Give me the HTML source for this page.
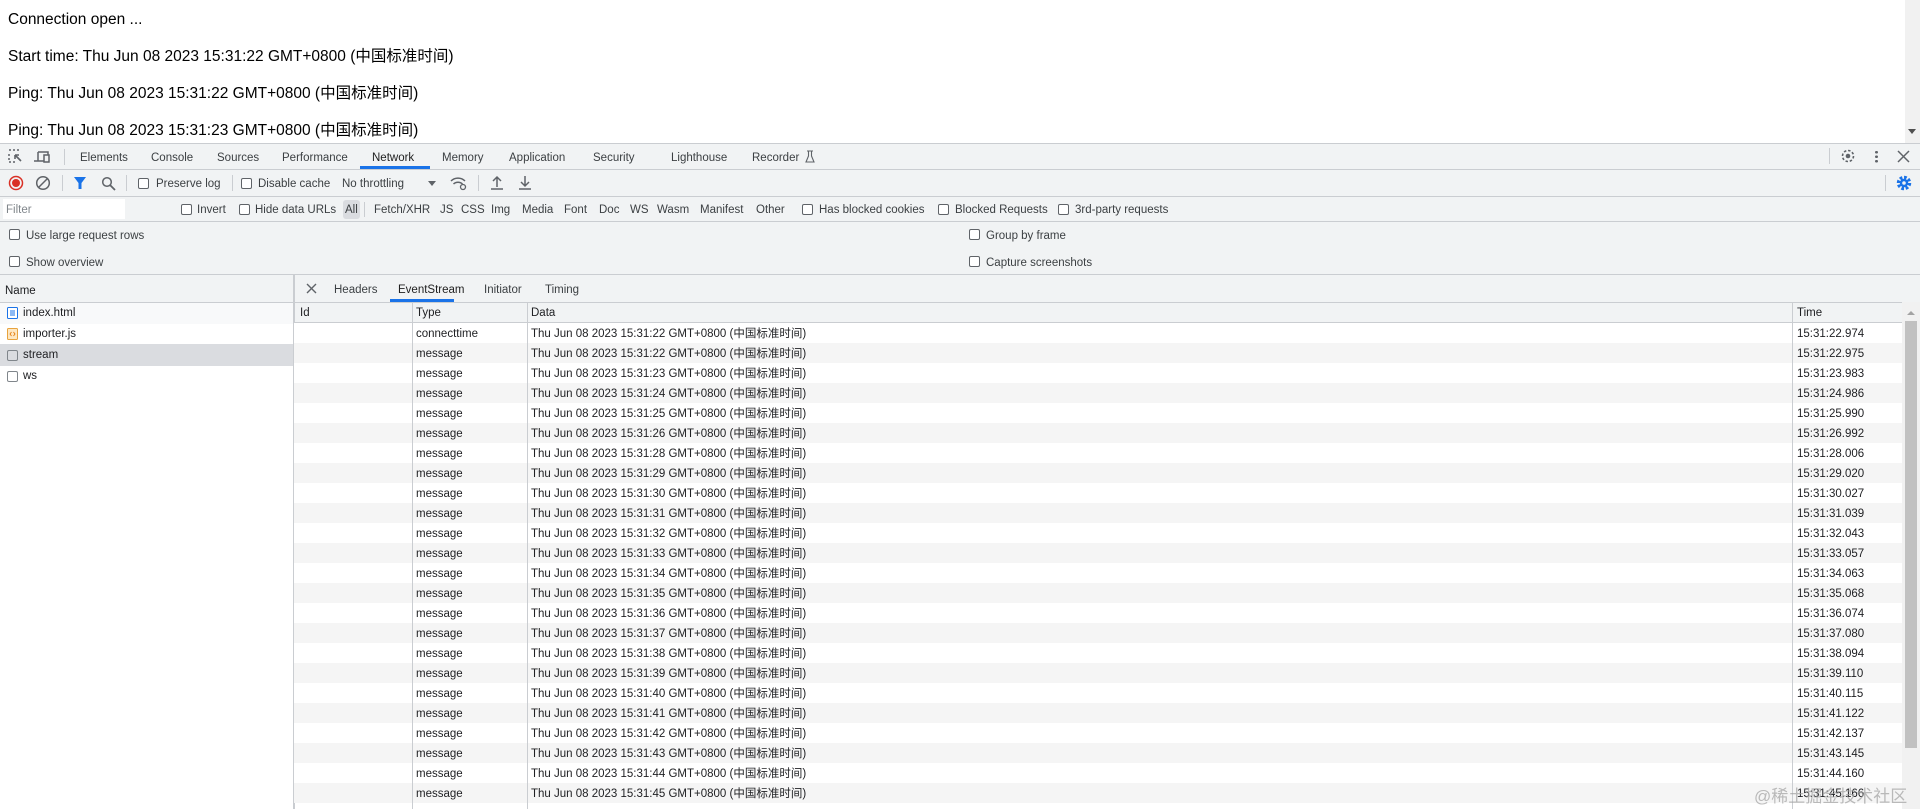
<!DOCTYPE html>
<html><head><meta charset="utf-8"><style>
*{box-sizing:border-box;margin:0;padding:0}
body{width:1920px;height:809px;overflow:hidden;background:#fff;font-family:"Liberation Sans","Noto Sans CJK SC",sans-serif;position:relative;color:#202124}
.a{position:absolute;white-space:nowrap}
.t{font-size:11.5px;color:#3c4043;line-height:14px;margin-top:2px}
.pg{font-size:15.5px;color:#000;left:8px;line-height:18px}
.cb{position:absolute;width:11px;height:11px;border:1px solid #5f6368;border-radius:2px;background:#fff}
.hl{position:absolute;height:1px;background:#cacdd1;left:0;width:1920px}
.vl{position:absolute;width:1px;background:#cacdd1}
.row{position:absolute;left:294px;width:1608px;height:20px;font-size:11.5px;color:#202124}
.row span{position:absolute;top:1px;line-height:20px;height:20px}
</style></head><body>
<div class="a pg" style="top:11px">Connection open ...</div>
<div class="a pg" style="top:48px">Start time: Thu Jun 08 2023 15:31:22 GMT+0800 (中国标准时间)</div>
<div class="a pg" style="top:85px">Ping: Thu Jun 08 2023 15:31:22 GMT+0800 (中国标准时间)</div>
<div class="a pg" style="top:122px">Ping: Thu Jun 08 2023 15:31:23 GMT+0800 (中国标准时间)</div>
<div class="a" style="left:1905px;top:0;width:15px;height:143px;background:#f1f1f1"></div>
<div class="a" style="left:1908px;top:129px;width:0;height:0;border-left:4px solid transparent;border-right:4px solid transparent;border-top:5px solid #505050"></div>

<div class="a" style="left:0;top:143px;width:1920px;height:666px;background:#f1f3f4"></div>
<div class="hl" style="top:143px"></div>
<div class="hl" style="top:169px"></div>
<div class="hl" style="top:196px"></div>
<div class="hl" style="top:221px"></div>
<div class="hl" style="top:274px"></div>

<svg class="a" style="left:8px;top:149px" width="44" height="16" viewBox="0 0 44 16"><path d="M1 1h2M5 1h2M9 1h2M1 5v2M1 9v2M1 13h2M5 13h2" stroke="#5f6368" stroke-width="1.5"/><path d="M7 6l6 6M7 6h4M7 6v4" stroke="#5f6368" stroke-width="1.6" fill="none"/><path d="M30 3h10v3M30 3v9M26 12h10" stroke="#5f6368" stroke-width="1.5" fill="none"/><rect x="36" y="6" width="5" height="7" fill="none" stroke="#5f6368" stroke-width="1.5"/></svg>
<div class="vl" style="left:64px;top:149px;height:16px"></div>
<div class="a t" style="left:80px;top:149px">Elements</div>
<div class="a t" style="left:151px;top:149px">Console</div>
<div class="a t" style="left:217px;top:149px">Sources</div>
<div class="a t" style="left:282px;top:149px">Performance</div>
<div class="a t" style="left:372px;top:149px;color:#1f1f1f">Network</div>
<div class="a" style="left:360px;top:166px;width:70px;height:3px;background:#1a73e8"></div>
<div class="a t" style="left:442px;top:149px">Memory</div>
<div class="a t" style="left:509px;top:149px">Application</div>
<div class="a t" style="left:593px;top:149px">Security</div>
<div class="a t" style="left:671px;top:149px">Lighthouse</div>
<div class="a t" style="left:752px;top:149px">Recorder</div>
<svg class="a" style="left:805px;top:150px" width="10" height="13"><path d="M2 1h6M3.5 1v5L1 12h8L6.5 6V1" fill="none" stroke="#5f6368" stroke-width="1.1"/></svg>
<div class="vl" style="left:1829px;top:148px;height:16px"></div>
<svg class="a" style="left:1840px;top:148px" width="16" height="16" viewBox="0 0 16 16"><circle cx="8" cy="8" r="5.5" fill="none" stroke="#5f6368" stroke-width="1.6" stroke-dasharray="2.5 1.8"/><circle cx="8" cy="8" r="2.3" fill="#5f6368"/></svg>
<div class="a" style="left:1875px;top:150px;width:3px;height:13px;background:radial-gradient(circle,#5f6368 1.3px,transparent 1.5px) 0 0/3px 4.5px"></div>
<svg class="a" style="left:1897px;top:150px" width="13" height="13"><path d="M1 1l11 11M12 1L1 12" stroke="#5f6368" stroke-width="1.5"/></svg>

<svg class="a" style="left:8px;top:175px" width="16" height="16"><circle cx="8" cy="8" r="6.5" fill="none" stroke="#d93025" stroke-width="1.5"/><circle cx="8" cy="8" r="4" fill="#d93025"/></svg>
<svg class="a" style="left:35px;top:175px" width="16" height="16"><circle cx="8" cy="8" r="6.3" fill="none" stroke="#5f6368" stroke-width="1.5"/><path d="M3.5 12.5l9-9" stroke="#5f6368" stroke-width="1.5"/></svg>
<div class="vl" style="left:62px;top:175px;height:16px"></div>
<svg class="a" style="left:74px;top:176px" width="12" height="14"><path d="M0 1h12L7.5 7v6h-3V7z" fill="#1a73e8"/></svg>
<svg class="a" style="left:101px;top:176px" width="15" height="15"><circle cx="6" cy="6" r="4.3" fill="none" stroke="#5f6368" stroke-width="1.5"/><path d="M9 9l5 5" stroke="#5f6368" stroke-width="1.8"/></svg>
<div class="vl" style="left:126px;top:175px;height:16px"></div>
<div class="cb" style="left:138px;top:178px"></div>
<div class="a t" style="left:156px;top:175px">Preserve log</div>
<div class="vl" style="left:232px;top:175px;height:16px"></div>
<div class="cb" style="left:241px;top:178px"></div>
<div class="a t" style="left:258px;top:175px">Disable cache</div>
<div class="a t" style="left:342px;top:175px">No throttling</div>
<div class="a" style="left:428px;top:181px;border-left:4px solid transparent;border-right:4px solid transparent;border-top:5px solid #5f6368"></div>
<svg class="a" style="left:450px;top:175px" width="18" height="16"><path d="M1 6a10 10 0 0 1 14 0M3.5 9a6.5 6.5 0 0 1 9 0" fill="none" stroke="#5f6368" stroke-width="1.5"/><circle cx="13" cy="12" r="2.5" fill="none" stroke="#5f6368" stroke-width="1.3"/></svg>
<div class="vl" style="left:478px;top:175px;height:16px"></div>
<svg class="a" style="left:490px;top:175px" width="14" height="16"><path d="M7 12V2M3 6l4-4 4 4M1 14h12" fill="none" stroke="#5f6368" stroke-width="1.5"/></svg>
<svg class="a" style="left:518px;top:175px" width="14" height="16"><path d="M7 1v10M3 7l4 4 4-4M1 14h12" fill="none" stroke="#5f6368" stroke-width="1.5"/></svg>
<div class="vl" style="left:1885px;top:175px;height:16px"></div>
<svg class="a" style="left:1896px;top:175px" width="16" height="16" viewBox="0 0 16 16"><circle cx="8" cy="8" r="5.5" fill="none" stroke="#1a73e8" stroke-width="3.5" stroke-dasharray="2.6 1.7"/><circle cx="8" cy="8" r="4.2" fill="#1a73e8"/><circle cx="8" cy="8" r="1.8" fill="#f1f3f4"/></svg>

<div class="a" style="left:3px;top:199px;width:122px;height:20px;background:#fff"></div>
<div class="a t" style="left:6px;top:201px;color:#80868b">Filter</div>
<div class="cb" style="left:181px;top:204px"></div><div class="a t" style="left:197px;top:201px">Invert</div>
<div class="cb" style="left:239px;top:204px"></div><div class="a t" style="left:255px;top:201px">Hide data URLs</div>
<div class="a" style="left:343px;top:200px;width:17px;height:19px;background:#dadce0;border-radius:3px"></div>
<div class="a t" style="left:345px;top:201px">All</div>
<div class="vl" style="left:364px;top:202px;height:15px"></div>
<div class="a t" style="left:374px;top:201px">Fetch/XHR</div>
<div class="a t" style="left:440px;top:201px">JS</div>
<div class="a t" style="left:461px;top:201px">CSS</div>
<div class="a t" style="left:491px;top:201px">Img</div>
<div class="a t" style="left:522px;top:201px">Media</div>
<div class="a t" style="left:564px;top:201px">Font</div>
<div class="a t" style="left:599px;top:201px">Doc</div>
<div class="a t" style="left:630px;top:201px">WS</div>
<div class="a t" style="left:657px;top:201px">Wasm</div>
<div class="a t" style="left:700px;top:201px">Manifest</div>
<div class="a t" style="left:756px;top:201px">Other</div>
<div class="cb" style="left:802px;top:204px"></div><div class="a t" style="left:819px;top:201px">Has blocked cookies</div>
<div class="cb" style="left:938px;top:204px"></div><div class="a t" style="left:955px;top:201px">Blocked Requests</div>
<div class="cb" style="left:1058px;top:204px"></div><div class="a t" style="left:1075px;top:201px">3rd-party requests</div>

<div class="cb" style="left:9px;top:229px"></div><div class="a t" style="left:26px;top:227px">Use large request rows</div>
<div class="cb" style="left:9px;top:256px"></div><div class="a t" style="left:26px;top:254px">Show overview</div>
<div class="cb" style="left:969px;top:229px"></div><div class="a t" style="left:986px;top:227px">Group by frame</div>
<div class="cb" style="left:969px;top:256px"></div><div class="a t" style="left:986px;top:254px">Capture screenshots</div>

<div class="a" style="left:0;top:302px;width:293px;height:507px;background:#fff"></div>
<div class="a" style="left:0;top:302px;width:293px;height:22px;background:#f8f9fa"></div>
<div class="a" style="left:0;top:344px;width:293px;height:22px;background:#dadce0"></div>
<div class="hl" style="top:302px;width:294px"></div>
<div class="a t" style="left:5px;top:282px;color:#202124">Name</div>
<div class="vl" style="left:293px;top:274px;height:535px;width:2px;background:#cacdd1"></div>
<svg class="a" style="left:7px;top:307px" width="11" height="12"><rect x=".5" y=".5" width="10" height="11" rx="1" fill="#fff" stroke="#1a73e8"/><path d="M3 4h5M3 6h5M3 8h5" stroke="#1a73e8"/></svg>
<div class="a t" style="left:23px;top:304px;color:#202124">index.html</div>
<svg class="a" style="left:7px;top:328px" width="11" height="12"><rect x=".5" y=".5" width="10" height="11" rx="1" fill="#fde7c2" stroke="#e8a33d"/><path d="M4.5 4L3 6l1.5 2M6.5 4L8 6 6.5 8" stroke="#e37400" fill="none" stroke-width=".8"/></svg>
<div class="a t" style="left:23px;top:325px;color:#202124">importer.js</div>
<div class="cb" style="left:7px;top:350px;border-color:#80868b;background:transparent"></div>
<div class="a t" style="left:23px;top:346px;color:#202124">stream</div>
<div class="cb" style="left:7px;top:371px;border-color:#80868b"></div>
<div class="a t" style="left:23px;top:367px;color:#202124">ws</div>

<svg class="a" style="left:306px;top:283px" width="11" height="11"><path d="M1 1l9 9M10 1L1 10" stroke="#5f6368" stroke-width="1.4"/></svg>
<div class="a t" style="left:334px;top:281px">Headers</div>
<div class="a t" style="left:398px;top:281px;color:#1f1f1f">EventStream</div>
<div class="a" style="left:390px;top:299px;width:64px;height:3px;background:#1a73e8"></div>
<div class="a t" style="left:484px;top:281px">Initiator</div>
<div class="a t" style="left:545px;top:281px">Timing</div>
<div class="hl" style="top:302px;left:295px;width:1625px"></div>

<div class="a" style="left:295px;top:303px;width:1607px;height:506px;background:#fff"></div>
<div class="a" style="left:295px;top:303px;width:1607px;height:20px;background:#f1f3f4;border-bottom:1px solid #cacdd1"></div>
<div class="a t" style="left:300px;top:304px;color:#202124">Id</div>
<div class="a t" style="left:416px;top:304px;color:#202124">Type</div>
<div class="a t" style="left:531px;top:304px;color:#202124">Data</div>
<div class="a t" style="left:1797px;top:304px;color:#202124">Time</div>
<div id="rows"></div>
<div class="vl" style="left:412px;top:303px;height:506px"></div>
<div class="vl" style="left:527px;top:303px;height:506px"></div>
<div class="vl" style="left:1792px;top:303px;height:506px"></div>
<div class="a" style="left:1902px;top:302px;width:18px;height:507px;background:#f1f1f1"></div>
<div class="a" style="left:1907px;top:311px;border-left:4px solid transparent;border-right:4px solid transparent;border-bottom:4px solid #a3a3a3"></div>
<div class="a" style="left:1905px;top:321px;width:12px;height:427px;background:#c1c1c1"></div>
<div class="a" style="left:1754px;top:787px;font-size:17px;line-height:20px;color:rgba(160,160,160,.7)">@稀土掘金技术社区</div>
<script>
var times=["22.974","22.975","23.983","24.986","25.990","26.992","28.006","29.020","30.027","31.039","32.043","33.057","34.063","35.068","36.074","37.080","38.094","39.110","40.115","41.122","42.137","43.145","44.160","45.166"];
var secs=[22,22,23,24,25,26,28,29,30,31,32,33,34,35,36,37,38,39,40,41,42,43,44,45];
var h="";
for(var i=0;i<24;i++){
 h+='<div class="row" style="top:'+(323+i*20)+'px;background:'+(i%2?'#f5f5f5':'#fff')+'"><span style="left:122px">'+(i==0?'connecttime':'message')+'</span><span style="left:237px">Thu Jun 08 2023 15:31:'+secs[i]+' GMT+0800 (中国标准时间)</span><span style="left:1503px">15:31:'+times[i]+'</span></div>';
}
document.getElementById('rows').innerHTML=h;
</script>
</body></html>
